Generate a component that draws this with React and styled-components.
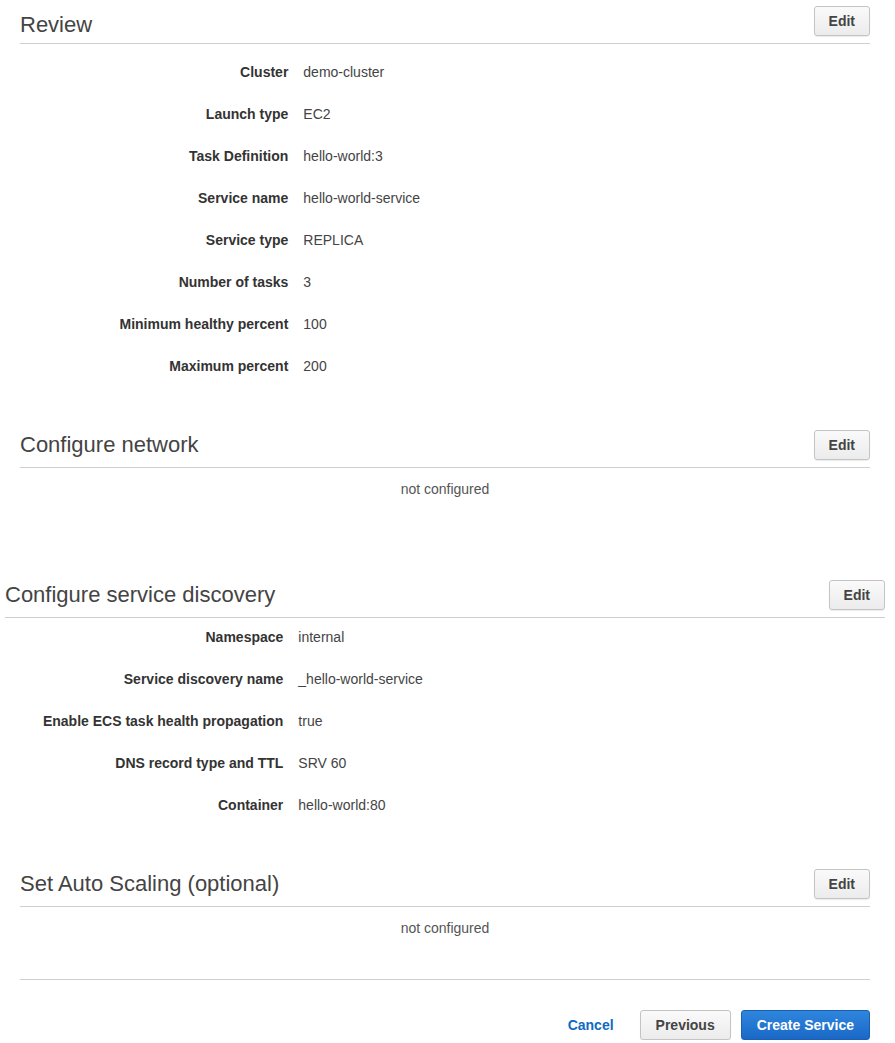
import React from "react";
import styled, { createGlobalStyle } from "styled-components";

const GlobalStyle = createGlobalStyle`
  body {
    margin: 0;
    background: #fff;
    font-family: "Liberation Sans", Arial, sans-serif;
    color: #444;
  }
`;

const Page = styled.div`
  padding: 6px 25px 0 20px;
  width: 850px;
`;

const Section = styled.section`
  margin: 0 ${(p) => (p.$wide ? "-15px" : "0")};
  margin-bottom: ${(p) => p.$gap}px;
`;

const Header = styled.div`
  display: flex;
  align-items: flex-end;
  justify-content: space-between;
  padding-bottom: 7px;
  border-bottom: 1px solid #cfcfcf;
`;

const Title = styled.h2`
  margin: 0 0 ${(p) => (p.$low ? 0 : 4)}px;
  font-size: 22px;
  font-weight: normal;
  line-height: 22px;
  color: #444;
`;

const Button = styled.button`
  height: 30px;
  padding: 0 ${(p) => (p.$pad ? p.$pad : 14)}px;
  border-radius: 3px;
  font-family: "Liberation Sans", Arial, sans-serif;
  font-size: 14px;
  font-weight: bold;
  cursor: pointer;
  border: 1px solid #c4c4c4;
  color: #444;
  background: linear-gradient(#fafafa, #ececec);
  box-shadow: 0 1px 1px rgba(0, 0, 0, 0.08);
  ${(p) =>
    p.$primary &&
    `
    border-color: #1b5fb3;
    color: #fff;
    background: linear-gradient(#2f86de, #1a68c6);
  `}
`;

const List = styled.div`
  padding-top: ${(p) => p.$top}px;
`;

const Row = styled.div`
  display: grid;
  grid-template-columns: 33.333% 1fr;
  padding: 10px 0 14px;
  line-height: 18px;
  font-size: 14px;
`;

const Label = styled.div`
  padding-right: 15px;
  text-align: right;
  font-weight: bold;
  color: #333;
`;

const Value = styled.div`
  color: #444;
`;

const Empty = styled.div`
  padding: 12px 0;
  line-height: 18px;
  font-size: 14px;
  text-align: center;
  color: #555;
`;

const Footer = styled.div`
  border-top: 1px solid #cfcfcf;
  padding-top: 30px;
  display: flex;
  justify-content: flex-end;
  align-items: center;
  gap: 10px;
`;

const LinkButton = styled.a`
  font-size: 14px;
  font-weight: bold;
  color: #0f6ac4;
  margin-right: 16px;
  cursor: pointer;
`;

const review = [
  ["Cluster", "demo-cluster"],
  ["Launch type", "EC2"],
  ["Task Definition", "hello-world:3"],
  ["Service name", "hello-world-service"],
  ["Service type", "REPLICA"],
  ["Number of tasks", "3"],
  ["Minimum healthy percent", "100"],
  ["Maximum percent", "200"],
];

const discovery = [
  ["Namespace", "internal"],
  ["Service discovery name", "_hello-world-service"],
  ["Enable ECS task health propagation", "true"],
  ["DNS record type and TTL", "SRV 60"],
  ["Container", "hello-world:80"],
];

function SectionHeader({ title, low }) {
  return (
    <Header>
      <Title $low={low}>{title}</Title>
      <Button>Edit</Button>
    </Header>
  );
}

function Rows({ items, top }) {
  return (
    <List $top={top}>
      {items.map(([k, v]) => (
        <Row key={k}>
          <Label>{k}</Label>
          <Value>{v}</Value>
        </Row>
      ))}
    </List>
  );
}

export default function App() {
  return (
    <Page>
      <GlobalStyle />
      <Section $gap={41}>
        <SectionHeader title="Review" low />
        <Rows items={review} top={9} />
      </Section>
      <Section $gap={70}>
        <SectionHeader title="Configure network" />
        <Empty>not configured</Empty>
      </Section>
      <Section $wide $gap={41}>
        <SectionHeader title="Configure service discovery" />
        <Rows items={discovery} top={0} />
      </Section>
      <Section $gap={30}>
        <SectionHeader title="Set Auto Scaling (optional)" />
        <Empty>not configured</Empty>
      </Section>
      <Footer>
        <LinkButton>Cancel</LinkButton>
        <Button $pad={15}>Previous</Button>
        <Button $primary $pad={15}>Create Service</Button>
      </Footer>
    </Page>
  );
}
